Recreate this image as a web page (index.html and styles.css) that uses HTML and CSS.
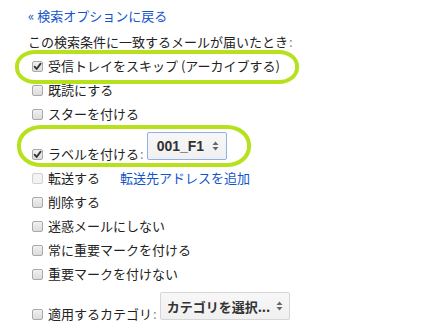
FILE: index.html
```html
<!DOCTYPE html>
<html lang="ja">
<head>
<meta charset="utf-8">
<title>フィルタ</title>
<link rel="stylesheet" href="styles.css">
</head>
<body>
<div class="panel">
  <a class="back" href="#">« 検索オプションに戻る</a>
  <div class="heading">この検索条件に一致するメールが届いたとき<span class="colon">:</span></div>
  <ul class="actions">
    <li class="row">
      <span class="opt"><span class="cb checked"><svg viewBox="0 0 11 11" width="11" height="11"><path d="M2.6 5.6 L4.6 8 L8.6 2.6" fill="none" stroke="#333" stroke-width="1.8" stroke-linecap="round" stroke-linejoin="round"/></svg></span><span class="lbl">受信トレイをスキップ (アーカイブする)</span></span>
      <span class="ring ring-a"></span>
    </li>
    <li class="row"><span class="opt"><span class="cb"></span><span class="lbl">既読にする</span></span></li>
    <li class="row"><span class="opt"><span class="cb"></span><span class="lbl">スターを付ける</span></span></li>
    <li class="row tall">
      <span class="opt"><span class="cb checked"><svg viewBox="0 0 11 11" width="11" height="11"><path d="M2.6 5.6 L4.6 8 L8.6 2.6" fill="none" stroke="#333" stroke-width="1.8" stroke-linecap="round" stroke-linejoin="round"/></svg></span><span class="lbl">ラベルを付ける<span class="colon">:</span></span></span>
      <span class="select focused label-select"><span class="sel-text latin">001_F1</span><svg class="arrows" viewBox="0 0 7 12" width="7" height="12"><path d="M0.5 5 L3.5 1.5 L6.5 5 Z M0.5 7 L3.5 10.5 L6.5 7 Z" fill="#666"/></svg></span>
      <span class="ring ring-b"></span>
    </li>
    <li class="row"><span class="opt"><span class="cb disabled"></span><span class="lbl">転送する</span></span><a class="add-link" href="#">転送先アドレスを追加</a></li>
    <li class="row"><span class="opt"><span class="cb"></span><span class="lbl">削除する</span></span></li>
    <li class="row"><span class="opt"><span class="cb"></span><span class="lbl">迷惑メールにしない</span></span></li>
    <li class="row"><span class="opt"><span class="cb"></span><span class="lbl">常に重要マークを付ける</span></span></li>
    <li class="row"><span class="opt"><span class="cb"></span><span class="lbl">重要マークを付けない</span></span></li>
    <li class="row tall">
      <span class="opt"><span class="cb"></span><span class="lbl">適用するカテゴリ<span class="colon">:</span></span></span>
      <span class="select cat-select"><span class="sel-text">カテゴリを選択...</span><svg class="arrows" viewBox="0 0 7 12" width="7" height="12"><path d="M0.5 5 L3.5 1.5 L6.5 5 Z M0.5 7 L3.5 10.5 L6.5 7 Z" fill="#666"/></svg></span>
    </li>
  </ul>
</div>
</body>
</html>
```
FILE: styles.css
```css
html, body {
  margin: 0;
  padding: 0;
  background: #ffffff;
}
body {
  font-family: "Noto Sans CJK JP", "Noto Sans", sans-serif;
  font-size: 13px;
  color: #222222;
}
.panel {
  padding: 4px 0 0 28px;
}
.back {
  display: block;
  height: 24px;
  line-height: 24px;
  color: #1155cc;
  text-decoration: none;
  margin-bottom: 2px;
}
.heading {
  height: 24px;
  line-height: 24px;
}
.colon {
  color: #8a8a8a;
  margin-left: 1px;
}
.actions {
  list-style: none;
  margin: 0;
  padding: 0 0 0 4px;
}
.row {
  position: relative;
  display: flex;
  align-items: center;
  height: 24px;
}
.row.tall {
  height: 40px;
  align-items: flex-end;
}
.opt {
  display: flex;
  align-items: center;
  height: 24px;
  gap: 5px;
}
.lbl {
  line-height: 24px;
  white-space: nowrap;
}
.cb {
  box-sizing: border-box;
  width: 11px;
  height: 11px;
  border: 1px solid #a9a9a9;
  border-radius: 2px;
  background: linear-gradient(#f0f0f0, #dcdcdc);
  display: flex;
  align-items: center;
  justify-content: center;
}
.cb svg {
  display: block;
  margin: -1px;
}
.cb.disabled {
  border-color: #d0d0d0;
  background: #f3f3f3;
}
.add-link {
  color: #1155cc;
  text-decoration: none;
  margin-left: 20px;
  line-height: 24px;
}
.select {
  box-sizing: border-box;
  display: flex;
  align-items: center;
  justify-content: space-between;
  height: 28px;
  margin: 0 0 6px 3px;
  padding: 0 7px 0 9px;
  border: 1px solid #d6d6d6;
  border-radius: 2px;
  background: linear-gradient(#f7f7f7, #f0f0f0);
  color: #333333;
  font-weight: bold;
}
.select.focused {
  border-color: #8fb0ec;
}
.label-select {
  width: 80px;
}
.cat-select {
  width: 130px;
  padding-left: 6px;
  padding-right: 6px;
}
.sel-text {
  white-space: nowrap;
}
.sel-text.latin {
  font-family: "Liberation Sans", Arial, sans-serif;
  font-size: 14px;
}
.arrows {
  display: block;
}
.ring {
  position: absolute;
  box-sizing: border-box;
  border: 4px solid #b6e11c;
  pointer-events: none;
}
.ring-a {
  left: -17px;
  top: -4px;
  width: 284px;
  height: 34px;
  border-radius: 20px / 16px;
}
.ring-b {
  left: -15px;
  top: -1px;
  width: 234px;
  height: 42px;
  border-radius: 24px / 20px;
}
```
